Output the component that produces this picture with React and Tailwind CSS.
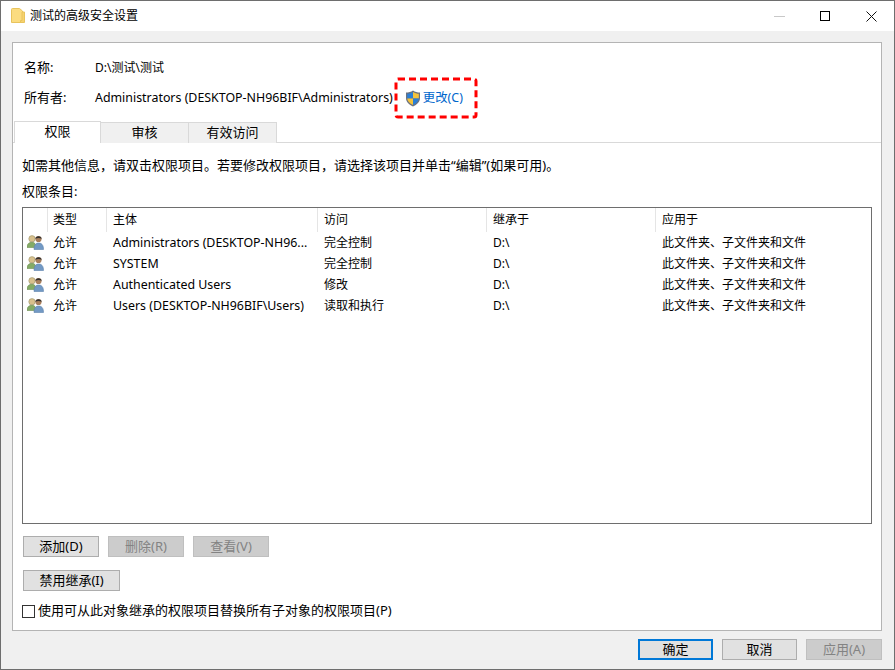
const rows = [
  ['允许', 'Administrators (DESKTOP-NH96...', '完全控制', 'D:\\', '此文件夹、子文件夹和文件'],
  ['允许', 'SYSTEM', '完全控制', 'D:\\', '此文件夹、子文件夹和文件'],
  ['允许', 'Authenticated Users', '修改', 'D:\\', '此文件夹、子文件夹和文件'],
  ['允许', 'Users (DESKTOP-NH96BIF\\Users)', '读取和执行', 'D:\\', '此文件夹、子文件夹和文件'],
]

function FolderIcon() {
  return (
    <svg width="14" height="16" viewBox="0 0 14 16" className="shrink-0">
      <path d="M.5 1.500 Q.5.5 1.500.5 H8.500 L11.500 3 V14.500 H.5 Z" fill="#fbdc80" stroke="#e8c35c" />
      <path d="M11 4 H13.500 V14.500 H9.500 V12.500 H11 Z" fill="#f6d26e" stroke="#e8c35c" />
    </svg>
  )
}

function ShieldIcon() {
  return (
    <svg width="16" height="17" viewBox="0 0 16 17" className="shrink-0">
      <path d="M8 .5 C10 2 12.500 2.600 15 2.600 V8 C15 12 12 14.800 8 16.500 C4 14.800 1 12 1 8 V2.600 C3.500 2.600 6 2 8 .5 Z" fill="#6b7280" />
      <path d="M8 2 V8.500 H2.200 V3.800 C4.200 3.700 6.200 3.200 8 2 Z" fill="#2b7fd6" />
      <path d="M8 2 C9.800 3.200 11.800 3.700 13.800 3.800 V8.500 H8 Z" fill="#f5c33b" />
      <path d="M2.200 8.500 H8 V15 C4.800 13.500 2.400 11.500 2.200 8.500 Z" fill="#f5c33b" />
      <path d="M8 8.500 H13.800 C13.600 11.500 11.200 13.500 8 15 Z" fill="#2b7fd6" />
    </svg>
  )
}

function UsersIcon() {
  return (
    <svg width="17" height="15" viewBox="0 0 17 15" className="shrink-0">
      <circle cx="5" cy="3.800" r="3.200" fill="#d8c08c" stroke="#9c9670" strokeWidth=".6" />
      <path d="M0 12.500 C0 8.800 2 7.300 5 7.300 C7.500 7.300 9 8.800 9 12.500 Z" fill="#84ab66" stroke="#6f8f53" strokeWidth=".6" />
      <circle cx="11.500" cy="4" r="3.100" fill="#a87f5c" />
      <path d="M8.300 3.800 C8.300 .4 14.700 .4 14.700 3.800 C12.500 2.800 10.500 2.800 8.300 3.800 Z" fill="#33302e" />
      <path d="M7 14.500 C7 9.800 9 8 11.500 8 C14.500 8 16.500 9.800 16.500 14.500 Z" fill="#7299c4" stroke="#5e83ac" strokeWidth=".6" />
    </svg>
  )
}

function Button({ children, width, disabled, focused, className = '' }) {
  let look = 'border bg-[#e1e1e1] border-[#adadad] text-black'
  if (disabled) look = 'border bg-[#cccccc] border-[#bfbfbf] text-[#838383]'
  if (focused) look = 'border-2 bg-[#e1e1e1] border-[#0078d7] text-black'
  return (
    <div className={`h-[21px] flex items-center justify-center pb-[2px] text-[13px] ${width} ${look} ${className}`}>
      {children}
    </div>
  )
}

export default function App() {
  return (
    <div
      className="w-[895px] h-[670px] flex flex-col bg-[#f0f0f0] border border-[#6e6e6e] text-[12px] leading-[16px] text-black overflow-hidden"
      style={{ fontFamily: '"Noto Sans", "Noto Sans CJK SC", sans-serif' }}
    >
      {/* title bar */}
      <div className="h-[30px] shrink-0 bg-white flex items-center pl-[10px]">
        <FolderIcon />
        <span className="ml-[5px] flex-1">测试的高级安全设置</span>
        <div className="w-[46px] flex justify-center">
          <div className="w-[11px] h-px bg-[#c8c8c8]" />
        </div>
        <div className="w-[46px] flex justify-center">
          <div className="w-[10px] h-[10px] border border-black" />
        </div>
        <div className="w-[46px] flex justify-center">
          <svg width="11" height="11" viewBox="0 0 11 11">
            <path d="M.5.5 L10.500 10.500 M10.500.5 L.5 10.500" stroke="#111" strokeWidth="1" />
          </svg>
        </div>
      </div>

      {/* main panel */}
      <div className="relative ml-[11px] mr-[12px] mt-[11px] h-[589px] shrink-0 bg-white border border-[#b4b4b4] flex flex-col">
        <div className="pl-[11px] pt-[17px]">
          <div className="flex h-[16px] items-center">
            <span className="w-[71px] text-[13px] pb-[2px]">名称:</span>
            <span>D:\测试\测试</span>
          </div>
          <div className="flex h-[20px] items-center mt-[12px]">
            <span className="w-[71px] text-[13px] pb-[2px]">所有者:</span>
            <span className="text-[12.400px]">Administrators (DESKTOP-NH96BIF\Administrators)</span>
            <span className="ml-[12px]"><ShieldIcon /></span>
            <span className="ml-[2px] text-[12.400px] text-[#0066cc]">更改(C)</span>
          </div>
        </div>

        {/* red annotation */}
        <svg width="84" height="42" viewBox="0 0 84 42" className="absolute left-[381px] top-[34px]">
          <rect x="2" y="2" width="80" height="38" rx="2" fill="none" stroke="#ff0000" strokeWidth="3" strokeDasharray="7 4" />
        </svg>

        {/* tabs */}
        <div className="flex pl-[1px] mt-[13px] h-[22px] border-b border-[#d9d9d9] text-[13px]">
          <div className="w-[87px] h-[22px] pb-[3px] bg-white border-t border-l border-r border-[#d9d9d9] flex items-center justify-center">权限</div>
          <div className="w-[88px] h-[21px] pb-[2px] mt-px bg-[#f0f0f0] border-t border-r border-[#d9d9d9] flex items-center justify-center">审核</div>
          <div className="w-[88px] h-[21px] pb-[2px] mt-px bg-[#f0f0f0] border-t border-r border-[#d9d9d9] flex items-center justify-center">有效访问</div>
        </div>

        <div className="px-[9px] pt-[14px] flex-1 flex flex-col">
          <p className="text-[13px]">如需其他信息，请双击权限项目。若要修改权限项目，请选择该项目并单击“编辑”(如果可用)。</p>
          <p className="mt-[10px] text-[13px]">权限条目:</p>

          {/* permission list */}
          <div className="mt-[8px] w-[850px] h-[317px] border border-[#6e6e6e]">
            <div className="flex h-[24px] items-center">
              <div className="w-[24px]" />
              <div className="w-[59px] h-full pl-[5px] border-l border-[#e5e5e5] flex items-center">类型</div>
              <div className="w-[211px] h-full pl-[6px] border-l border-[#e5e5e5] flex items-center">主体</div>
              <div className="w-[169px] h-full pl-[6px] border-l border-[#e5e5e5] flex items-center">访问</div>
              <div className="w-[169px] h-full pl-[6px] border-l border-[#e5e5e5] flex items-center">继承于</div>
              <div className="flex-1 h-full pl-[6px] border-l border-[#e5e5e5] flex items-center">应用于</div>
            </div>
            {rows.map((row) => (
              <div key={row[1]} className="flex h-[21px] items-center">
                <div className="w-[24px] pl-[4px]"><UsersIcon /></div>
                <div className="w-[59px] pl-[6px]">{row[0]}</div>
                <div className="w-[211px] pl-[7px] whitespace-nowrap text-[12.400px]">{row[1]}</div>
                <div className="w-[169px] pl-[7px]">{row[2]}</div>
                <div className="w-[169px] pl-[7px]">{row[3]}</div>
                <div className="flex-1 pl-[7px]">{row[4]}</div>
              </div>
            ))}
          </div>

          <div className="flex mt-[12px] ml-px gap-[9px]">
            <Button width="w-[76px]">添加(D)</Button>
            <Button width="w-[76px]" disabled>删除(R)</Button>
            <Button width="w-[76px]" disabled>查看(V)</Button>
          </div>
          <Button width="w-[97px]" className="mt-[13px] ml-px">禁用继承(I)</Button>
          <div className="flex items-center mt-[11px]">
            <div className="w-[13px] h-[13px] border border-[#333] bg-white" />
            <span className="ml-[3px] text-[13px] pb-[2px]">使用可从此对象继承的权限项目替换所有子对象的权限项目(P)</span>
          </div>
        </div>
      </div>

      {/* footer buttons */}
      <div className="flex justify-end gap-[9px] mt-[8px] pr-[12px]">
        <Button width="w-[75px]" focused>确定</Button>
        <Button width="w-[75px]">取消</Button>
        <Button width="w-[76px]" disabled>应用(A)</Button>
      </div>
    </div>
  )
}
